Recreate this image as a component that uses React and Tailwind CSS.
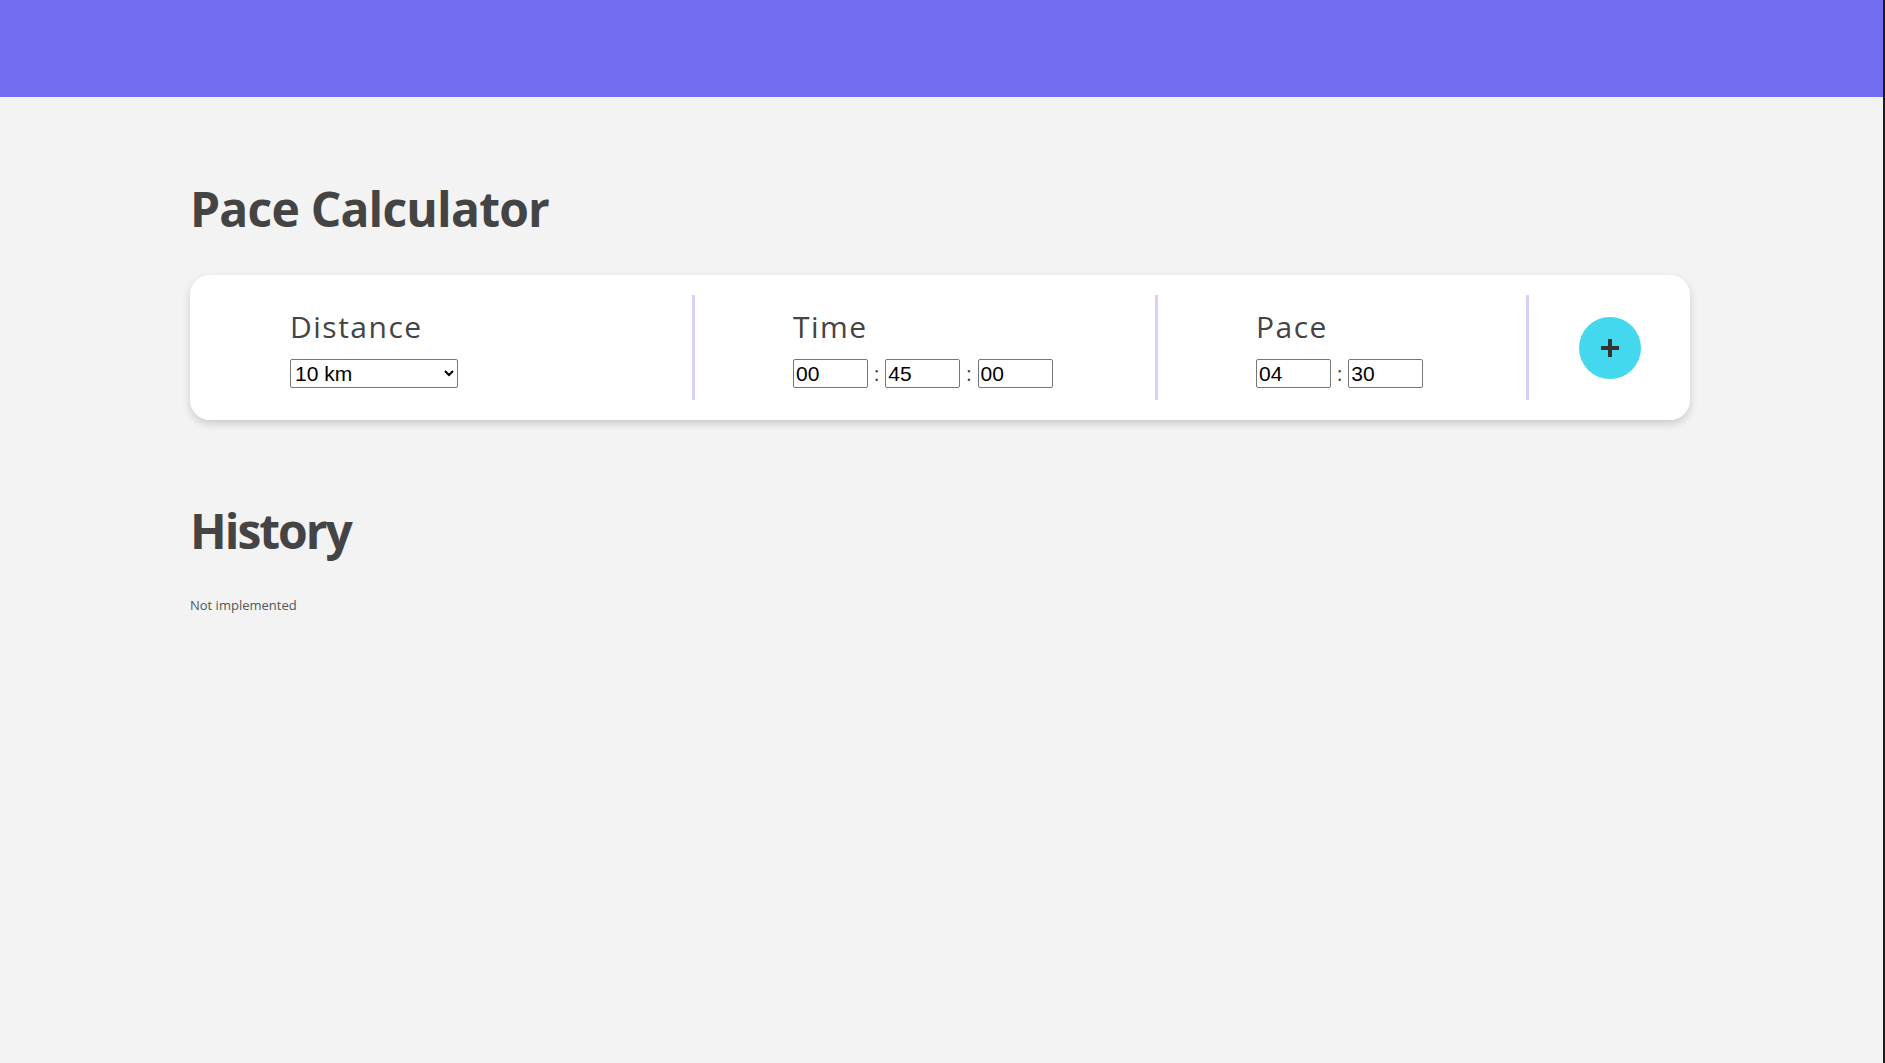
import React, { useState } from "react";

// ─── Small bits ───────────────────────────────────────────────────────────────

const font = { fontFamily: '"Open Sans", "Liberation Sans", sans-serif' };

const Field = ({ value, onChange }) => (
  <input
    value={value}
    onChange={(e) => onChange(e.target.value)}
    className="w-[75px] h-[29px] px-[2px] border border-[#767676] rounded-[2px] bg-white text-[21px] leading-none text-black outline-none font-['Liberation_Sans',Arial,sans-serif]"
  />
);

const Colon = () => (
  <span className="mx-[6px] text-[20px] leading-none text-[#444]">:</span>
);

const Section = ({ label, width, children }) => (
  <div className={`${width} h-full flex flex-col justify-center pl-[98px] border-l-[3px] border-[#d4d2fa] first:border-l-0 first:pl-[100px]`}>
    <div className="text-[30px] leading-[40px] font-normal tracking-[1.5px] text-[#444]">{label}</div>
    <div className="mt-3 flex items-center">{children}</div>
  </div>
);

// ─── Main Page ────────────────────────────────────────────────────────────────

const App = () => {
  const [distance, setDistance] = useState("10");
  const [time, setTime]         = useState({ h: "00", m: "45", s: "00" });
  const [pace, setPace]         = useState({ m: "04", s: "30" });

  return (
    <div className="min-h-[1063px] bg-[#f3f3f3] border-r-2 border-[#1b1b1b]" style={font}>

      {/* ── Top bar ── */}
      <div className="h-[97px] bg-[#726cf0]" />

      <div className="ml-[190px] w-[1500px] pt-[88px]">

        <h1 className="text-[48px] leading-[48px] font-bold text-[#444] tracking-[-0.8px]">
          Pace Calculator
        </h1>

        {/* ── Calculator card ── */}
        <div className="mt-[42px] h-[145px] py-5 flex items-stretch rounded-[20px] bg-white shadow-[0_4px_8px_rgba(0,0,0,0.16)]">
          <Section label="Distance" width="w-[502px]">
            <select
              value={distance}
              onChange={(e) => setDistance(e.target.value)}
              className="w-[168px] h-[29px] border border-[#767676] rounded-[2px] bg-white text-[21px] text-black outline-none font-['Liberation_Sans',Arial,sans-serif]"
            >
              <option value="5">5 km</option>
              <option value="10">10 km</option>
              <option value="21.1">Half marathon</option>
              <option value="42.2">Marathon</option>
            </select>
          </Section>

          <Section label="Time" width="w-[463px]">
            <Field value={time.h} onChange={(v) => setTime({ ...time, h: v })} />
            <Colon />
            <Field value={time.m} onChange={(v) => setTime({ ...time, m: v })} />
            <Colon />
            <Field value={time.s} onChange={(v) => setTime({ ...time, s: v })} />
          </Section>

          <Section label="Pace" width="w-[371px]">
            <Field value={pace.m} onChange={(v) => setPace({ ...pace, m: v })} />
            <Colon />
            <Field value={pace.s} onChange={(v) => setPace({ ...pace, s: v })} />
          </Section>

          <div className="flex-1 flex items-center justify-center border-l-[3px] border-[#d4d2fa]">
            <button className="w-[62px] h-[62px] rounded-full bg-[#43d8ee] flex items-center justify-center">
              <svg width="20" height="20" viewBox="0 0 20 20">
                <path d="M10 1v18M1 10h18" stroke="#333" strokeWidth="4" />
              </svg>
            </button>
          </div>
        </div>

        {/* ── History ── */}
        <h2 className="mt-[87px] text-[48px] leading-[48px] font-bold text-[#444] tracking-[-2px]">
          History
        </h2>
        <p className="mt-[41px] text-[13px] text-[#555]">Not implemented</p>
      </div>
    </div>
  );
};

export default App;
